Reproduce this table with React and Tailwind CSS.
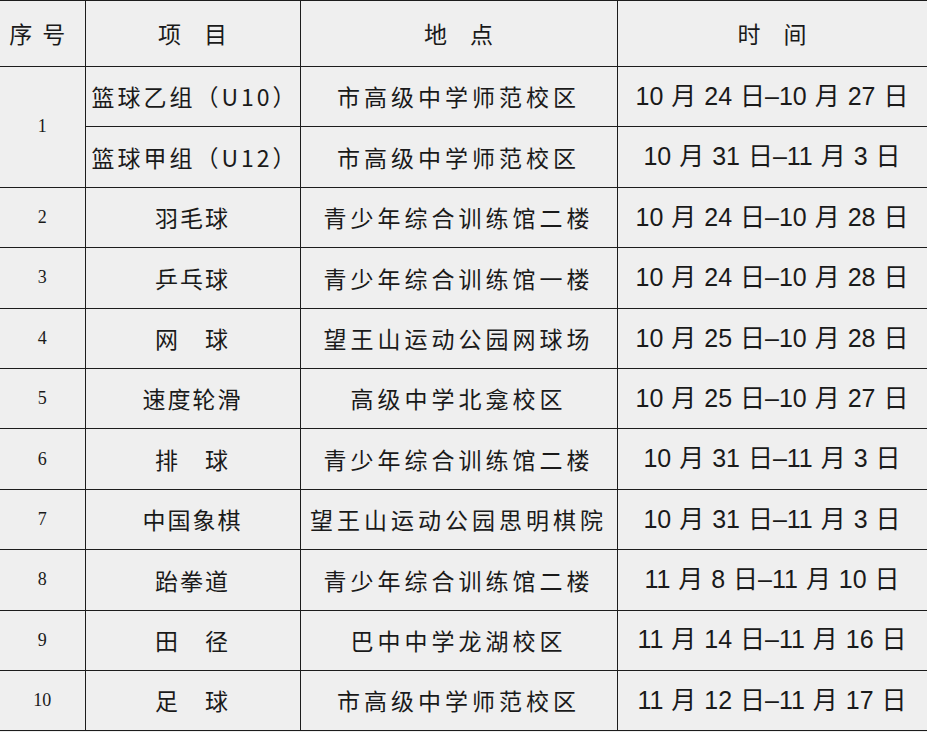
const ROWS = [
  { no: '2', item: '羽毛球', place: '青少年综合训练馆二楼', time: '10 月 24 日–10 月 28 日' },
  { no: '3', item: '乒乓球', place: '青少年综合训练馆一楼', time: '10 月 24 日–10 月 28 日' },
  { no: '4', item: '网　球', place: '望王山运动公园网球场', time: '10 月 25 日–10 月 28 日' },
  { no: '5', item: '速度轮滑', place: '高级中学北龛校区', time: '10 月 25 日–10 月 27 日' },
  { no: '6', item: '排　球', place: '青少年综合训练馆二楼', time: '10 月 31 日–11 月 3 日' },
  { no: '7', item: '中国象棋', place: '望王山运动公园思明棋院', time: '10 月 31 日–11 月 3 日' },
  { no: '8', item: '跆拳道', place: '青少年综合训练馆二楼', time: '11 月 8 日–11 月 10 日' },
  { no: '9', item: '田　径', place: '巴中中学龙湖校区', time: '11 月 14 日–11 月 16 日' },
  { no: '10', item: '足　球', place: '市高级中学师范校区', time: '11 月 12 日–11 月 17 日' },
]

const cjk = "font-['Noto_Sans_CJK_SC',sans-serif]"
const date = "text-[25px] [word-spacing:1px] font-['Liberation_Sans','Noto_Sans_CJK_SC',sans-serif]"
const cell = 'border-[1.5px] border-[#1c1c1c] text-center align-middle p-0'

export default function App() {
  return (
    <div className="w-[927px] h-[732px] bg-[#efefef] overflow-hidden">
      <table className="w-[927px] border-collapse table-fixed text-[#1a1a1a]">
        <colgroup>
          <col className="w-[85px]" />
          <col className="w-[215px]" />
          <col className="w-[317px]" />
          <col className="w-[310px]" />
        </colgroup>
        <thead>
          <tr className="h-[66px]">
            <th className={`${cell} border-l-0 font-normal text-[23px] ${cjk} tracking-[10px]`}>序号</th>
            <th className={`${cell} font-normal text-[23px] ${cjk}`}>项　目</th>
            <th className={`${cell} font-normal text-[23px] ${cjk}`}>地　点</th>
            <th className={`${cell} font-normal text-[23px] ${cjk}`}>时　间</th>
          </tr>
        </thead>
        <tbody>
          <tr className="h-[60.4px]">
            <td rowSpan={2} className={`${cell} border-l-0 text-[18px] font-['Liberation_Serif',serif]`}>1</td>
            <td className={`${cell} text-left pl-[6px] text-[23px] tracking-[3px] ${cjk}`}>篮球乙组（U10）</td>
            <td className={`${cell} text-[23px] tracking-[4px] ${cjk}`}>市高级中学师范校区</td>
            <td className={`${cell} ${date}`}>10 月 24 日–10 月 27 日</td>
          </tr>
          <tr className="h-[60.4px]">
            <td className={`${cell} text-left pl-[6px] text-[23px] tracking-[3px] ${cjk}`}>篮球甲组（U12）</td>
            <td className={`${cell} text-[23px] tracking-[4px] ${cjk}`}>市高级中学师范校区</td>
            <td className={`${cell} ${date}`}>10 月 31 日–11 月 3 日</td>
          </tr>
          {ROWS.map(r => (
            <tr key={r.no} className="h-[60.4px]">
              <td className={`${cell} border-l-0 text-[18px] font-['Liberation_Serif',serif]`}>{r.no}</td>
              <td className={`${cell} text-[23px] tracking-[2px] ${cjk}`}>{r.item}</td>
              <td className={`${cell} text-[23px] tracking-[4px] ${cjk}`}>{r.place}</td>
              <td className={`${cell} ${date}`}>{r.time}</td>
            </tr>
          ))}
        </tbody>
      </table>
    </div>
  )
}
